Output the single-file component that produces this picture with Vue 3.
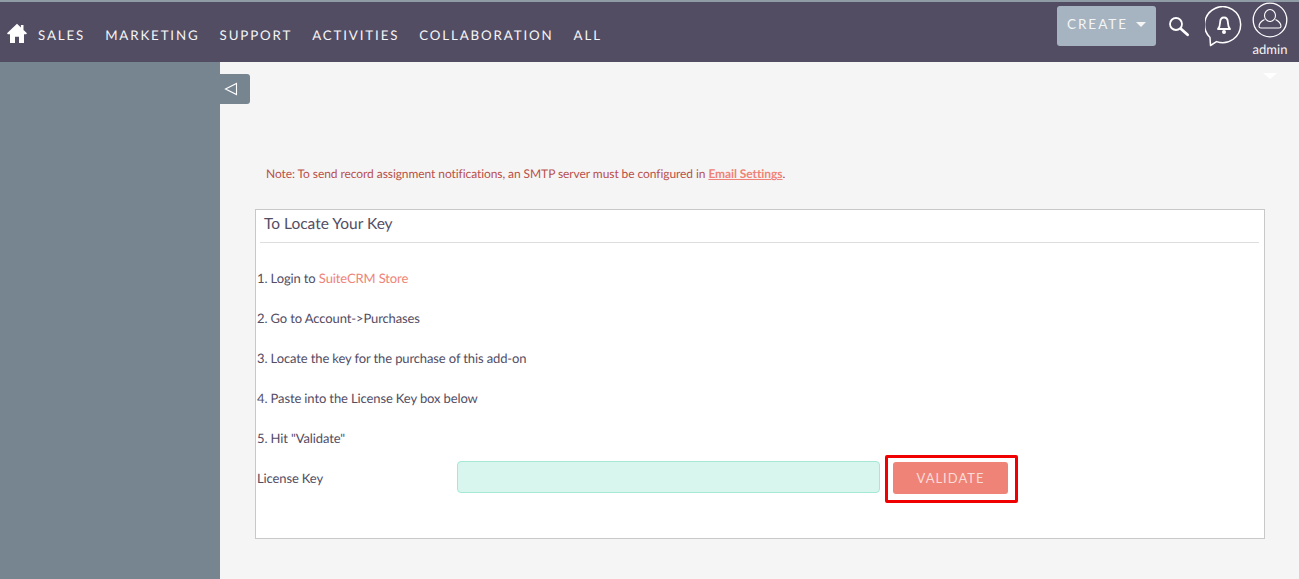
<template>
  <div class="page">
    <header class="navbar">
      <nav class="nav-left">
        <svg class="home" viewBox="0 0 20 20" width="20" height="20">
          <path d="M10 .8 0 10.200l.9 1H3V20h5v-6.200h4V20h5v-8.800h2.100l.9-1-3.500-3.300V2h-2.600v2.400z" fill="#fff" />
        </svg>
        <a v-for="item in menu" :key="item" class="nav-link">{{ item }}</a>
      </nav>
      <div class="nav-right">
        <button class="create">CREATE<span class="caret"></span></button>
        <svg class="search" viewBox="0 0 22 22" width="22" height="22">
          <circle cx="8" cy="8" r="6" fill="none" stroke="#fff" stroke-width="1.800" />
          <path d="M12.800 12.800 19.600 18.800" stroke="#fff" stroke-width="2.800" stroke-linecap="round" />
        </svg>
        <svg class="bell" viewBox="0 0 38 41" width="38" height="41">
          <path d="M5 31.500A18 18 0 1 1 11.500 35.600L5.500 39.500Z" fill="none" stroke="#fff" stroke-width="1.500" stroke-linejoin="round" />
          <path d="M13 23c2-2 2-4 2.100-6.500.1-3 1.700-5 3.900-5s3.800 2 3.900 5c.1 2.500.1 4.500 2.100 6.500z" fill="none" stroke="#fff" stroke-width="1.800" stroke-linejoin="round" />
          <circle cx="19" cy="26" r="2" fill="#fff" />
        </svg>
        <div class="user">
          <svg viewBox="0 0 36 36" width="36" height="36">
            <circle cx="18" cy="18" r="16.800" fill="none" stroke="#fff" stroke-width="1.300" />
            <ellipse cx="18" cy="13.500" rx="5.500" ry="6" fill="none" stroke="#fff" stroke-width="1.100" />
            <path d="M12.500 17.500C9.500 19 7 21.500 7 24.500c0 1 .8 1.500 2 1.500h18c1.200 0 2-.5 2-1.500 0-3-2.500-5.500-5.500-7" fill="none" stroke="#fff" stroke-width="1.100" />
          </svg>
          <span>admin</span>
        </div>
      </div>
    </header>

    <div class="layout">
      <aside class="sidebar"></aside>
      <main class="content">
        <button class="collapse">
          <svg viewBox="0 0 14 14" width="14" height="14">
            <path d="M1.500 7 12.500 1.500v11z" fill="none" stroke="#fff" stroke-width="1.100" />
          </svg>
        </button>
        <span class="menu-arrow"></span>

        <p class="note">
          Note: To send record assignment notifications, an SMTP server must be configured in
          <a class="email-link">Email Settings</a>.
        </p>

        <section class="panel">
          <h2>To Locate Your Key</h2>
          <div class="steps">
            <p>1. Login to <a class="store-link">SuiteCRM Store</a></p>
            <p>2. Go to Account-&gt;Purchases</p>
            <p>3. Locate the key for the purchase of this add-on</p>
            <p>4. Paste into the License Key box below</p>
            <p>5. Hit "Validate"</p>
          </div>
          <div class="key-row">
            <label for="license">License Key</label>
            <input id="license" type="text" />
            <div class="highlight">
              <button class="validate">VALIDATE</button>
            </div>
          </div>
        </section>
      </main>
    </div>
  </div>
</template>

<script setup>
const menu = ["SALES", "MARKETING", "SUPPORT", "ACTIVITIES", "COLLABORATION", "ALL"];
</script>

<style>
html,
body {
  margin: 0;
  overflow: hidden;
}
</style>

<style scoped>
.page {
  width: 1299px;
  height: 579px;
  display: flex;
  flex-direction: column;
  overflow: hidden;
  font-family: Lato, "Open Sans", sans-serif;
  font-size: 13px;
  color: #534d64;
  background: #f5f5f5;
  text-rendering: geometricPrecision;
}

.navbar {
  height: 60px;
  flex: none;
  display: flex;
  justify-content: space-between;
  background: #534d64;
  border-top: 2px solid #8f9ca5;
}

.nav-left {
  display: flex;
  align-items: center;
  padding-left: 7px;
  padding-top: 5px;
}

.home {
  margin: -4px 11px 0 0;
}

.nav-link {
  margin-right: 20px;
  color: #f5f5f5;
  font-size: 13.300px;
  letter-spacing: 1.870px;
  white-space: nowrap;
}

.nav-right {
  display: flex;
  align-items: flex-start;
  padding-right: 11px;
}

.create {
  width: 99px;
  height: 40px;
  margin-top: 4px;
  padding: 0 0 5px;
  border: none;
  border-radius: 3px;
  background: #a5b4c0;
  color: #f5f5f5;
  font-family: inherit;
  font-size: 13.500px;
  letter-spacing: 2px;
}

.caret {
  display: inline-block;
  margin-left: 8px;
  vertical-align: 2px;
  border-top: 5px solid #f5f5f5;
  border-left: 5px solid transparent;
  border-right: 5px solid transparent;
}

.search {
  margin: 14px 0 0 12px;
}

.bell {
  margin: 4px 0 0 15px;
}

.user {
  width: 36px;
  margin: 0 0 0 9px;
  display: flex;
  flex-direction: column;
  align-items: center;
  color: #f5f5f5;
  font-size: 13px;
}

.user span {
  margin-top: 4px;
  line-height: 14px;
}

.layout {
  flex: 1;
  display: flex;
  min-height: 0;
}

.sidebar {
  width: 220px;
  flex: none;
  background: #778591;
}

.content {
  flex: 1;
  position: relative;
  padding: 104px 34px 0 35px;
}

.collapse {
  position: absolute;
  left: 0;
  top: 12px;
  width: 30px;
  height: 30px;
  padding: 0 0 0 4px;
  border: none;
  border-radius: 0 3px 3px 0;
  background: #778591;
  display: flex;
  align-items: center;
}

.menu-arrow {
  position: absolute;
  top: 11px;
  right: 22px;
  border-top: 6px solid #fff;
  border-left: 7px solid transparent;
  border-right: 7px solid transparent;
}

.note {
  margin: 0 0 28px 11px;
  line-height: 15px;
  font-size: 12px;
  letter-spacing: -0.075px;
  color: #b9504a;
}

.email-link {
  color: #f08377;
  font-weight: 700;
  text-decoration: underline;
}

.panel {
  height: 328px;
  border: 1px solid #c8c8c8;
  background: #fff;
  padding: 0 5px 0 1px;
}

.panel h2 {
  margin: 0 0 0 3px;
  padding: 4px 0 7px 4px;
  height: 21px;
  line-height: 21px;
  font-size: 15.500px;
  font-weight: 400;
  border-bottom: 1px solid #dedede;
}

.steps {
  padding-top: 15px;
  letter-spacing: -0.120px;
}

.steps p {
  margin: 0;
  height: 40px;
  line-height: 40px;
}

.store-link {
  color: #f08377;
}

.key-row {
  display: flex;
  align-items: center;
  height: 40px;
}

.key-row label {
  width: 200px;
  flex: none;
  letter-spacing: -0.120px;
}

.key-row input {
  box-sizing: border-box;
  width: 423px;
  height: 32px;
  margin-top: -2px;
  padding: 0 8px;
  border: 1px solid #a5e8d6;
  border-radius: 4px;
  background: #d8f5ee;
  outline: none;
}

.highlight {
  box-sizing: border-box;
  width: 133px;
  height: 48px;
  margin: 1px 0 0 5px;
  padding: 4px 0 0 5px;
  border: 3px solid #f00000;
  border-radius: 2px;
}

.validate {
  display: block;
  width: 115px;
  height: 32px;
  padding: 0;
  border: none;
  border-radius: 3px;
  background: #f08377;
  color: #f8dcd8;
  font-family: inherit;
  font-size: 13px;
  letter-spacing: 1px;
}
</style>
